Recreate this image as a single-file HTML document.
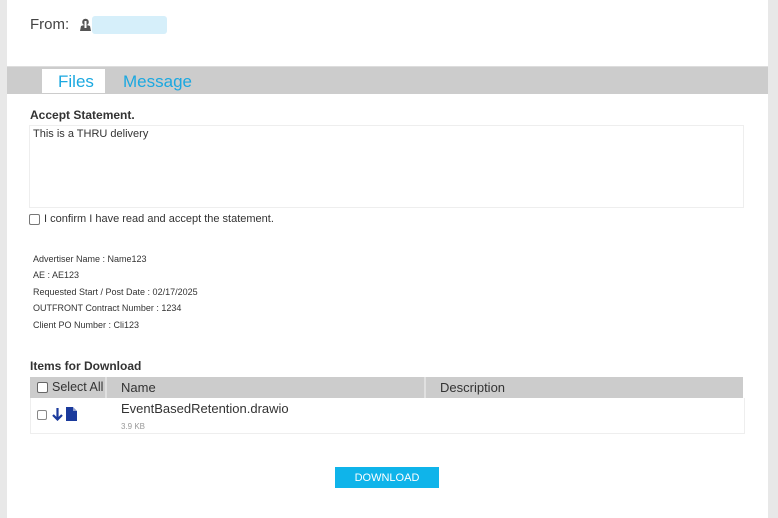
<!DOCTYPE html>
<html><head><style>
body{margin:0;width:778px;height:518px;background:#e8e8e8;font-family:"Liberation Sans","DejaVu Sans",sans-serif;color:#333;position:relative;overflow:hidden}
.p{position:absolute;left:7px;top:0;width:761px;height:518px;background:#fff}
.a{position:absolute;white-space:nowrap}
</style></head><body>
<div class="p"></div>
<div class="a" style="left:30px;top:16px;font-size:15px;color:#444">From:</div>
<svg class="a" style="left:80px;top:18px" width="11" height="13" viewBox="0 0 11 13"><circle cx="5.5" cy="4" r="3.3" fill="#555"/><path d="M0 13 L1 8 Q5.5 6 10 8 L11 13Z" fill="#555"/><rect x="4.5" y="3" width="2" height="7" fill="#fff"/></svg>
<div class="a" style="left:92px;top:16px;width:75px;height:18px;background:#d6effa;border-radius:3px"></div>
<div class="a" style="left:7px;top:66px;width:761px;height:27px;background:#cccccc;border-top:1px solid #ddd"></div>
<div class="a" style="left:42px;top:69px;width:63px;height:24px;background:#fff"></div>
<div class="a" style="left:58px;top:72px;font-size:17px;color:#1ba8e0">Files</div>
<div class="a" style="left:123px;top:72px;font-size:17px;color:#1ba8e0">Message</div>
<div class="a" style="left:30px;top:108px;font-size:12px;font-weight:bold">Accept Statement.</div>
<div class="a" style="left:29px;top:125px;width:713px;height:81px;border:1px solid #eee"></div>
<div class="a" style="left:33px;top:128px;font-size:11px">This is a THRU delivery</div>
<div class="a" style="left:29px;top:214px;width:9px;height:9px;border:1px solid #777;border-radius:2px"></div>
<div class="a" style="left:44px;top:213px;font-size:11px">I confirm I have read and accept the statement.</div>
<div class="a" style="left:33px;top:251px;font-size:9px;line-height:16.4px">Advertiser Name : Name123<br>AE : AE123<br>Requested Start / Post Date : 02/17/2025<br>OUTFRONT Contract Number : 1234<br>Client PO Number : Cli123</div>
<div class="a" style="left:30px;top:359px;font-size:12px;font-weight:bold">Items for Download</div>
<div class="a" style="left:30px;top:377px;width:713px;height:21px;background:#cccccc"></div>
<div class="a" style="left:105px;top:377px;width:2px;height:21px;background:#e0e0e0"></div>
<div class="a" style="left:424px;top:377px;width:2px;height:21px;background:#e0e0e0"></div>
<div class="a" style="left:37px;top:382px;width:9px;height:9px;border:1px solid #666;border-radius:2px;background:#fff"></div>
<div class="a" style="left:52px;top:380px;font-size:12.5px">Select All</div>
<div class="a" style="left:121px;top:380px;font-size:13px">Name</div>
<div class="a" style="left:440px;top:380px;font-size:13px">Description</div>
<div class="a" style="left:30px;top:398px;width:713px;height:35px;border:1px solid #eee;border-top:none"></div>
<div class="a" style="left:37px;top:410px;width:8px;height:8px;border:1px solid #888;border-radius:2px"></div>
<svg class="a" style="left:52px;top:407px" width="11" height="14" viewBox="0 0 11 14"><path d="M5.5 1V12M1 8L5.5 12.5L10 8" stroke="#1a3a9c" stroke-width="2.2" fill="none"/></svg>
<svg class="a" style="left:66px;top:407px" width="11" height="14" viewBox="0 0 11 14"><path d="M0 0H7L11 4V14H0Z" fill="#1a3a9c"/><path d="M7 0V4H11" fill="#fff" opacity=".5"/></svg>
<div class="a" style="left:121px;top:401px;font-size:13px">EventBasedRetention.drawio</div>
<div class="a" style="left:121px;top:422px;font-size:8px;color:#999">3.9 KB</div>
<div class="a" style="left:335px;top:467px;width:104px;height:21px;background:#0fb4ea;color:#fff;font-size:11px;text-align:center;line-height:22px">DOWNLOAD</div>
</body></html>
